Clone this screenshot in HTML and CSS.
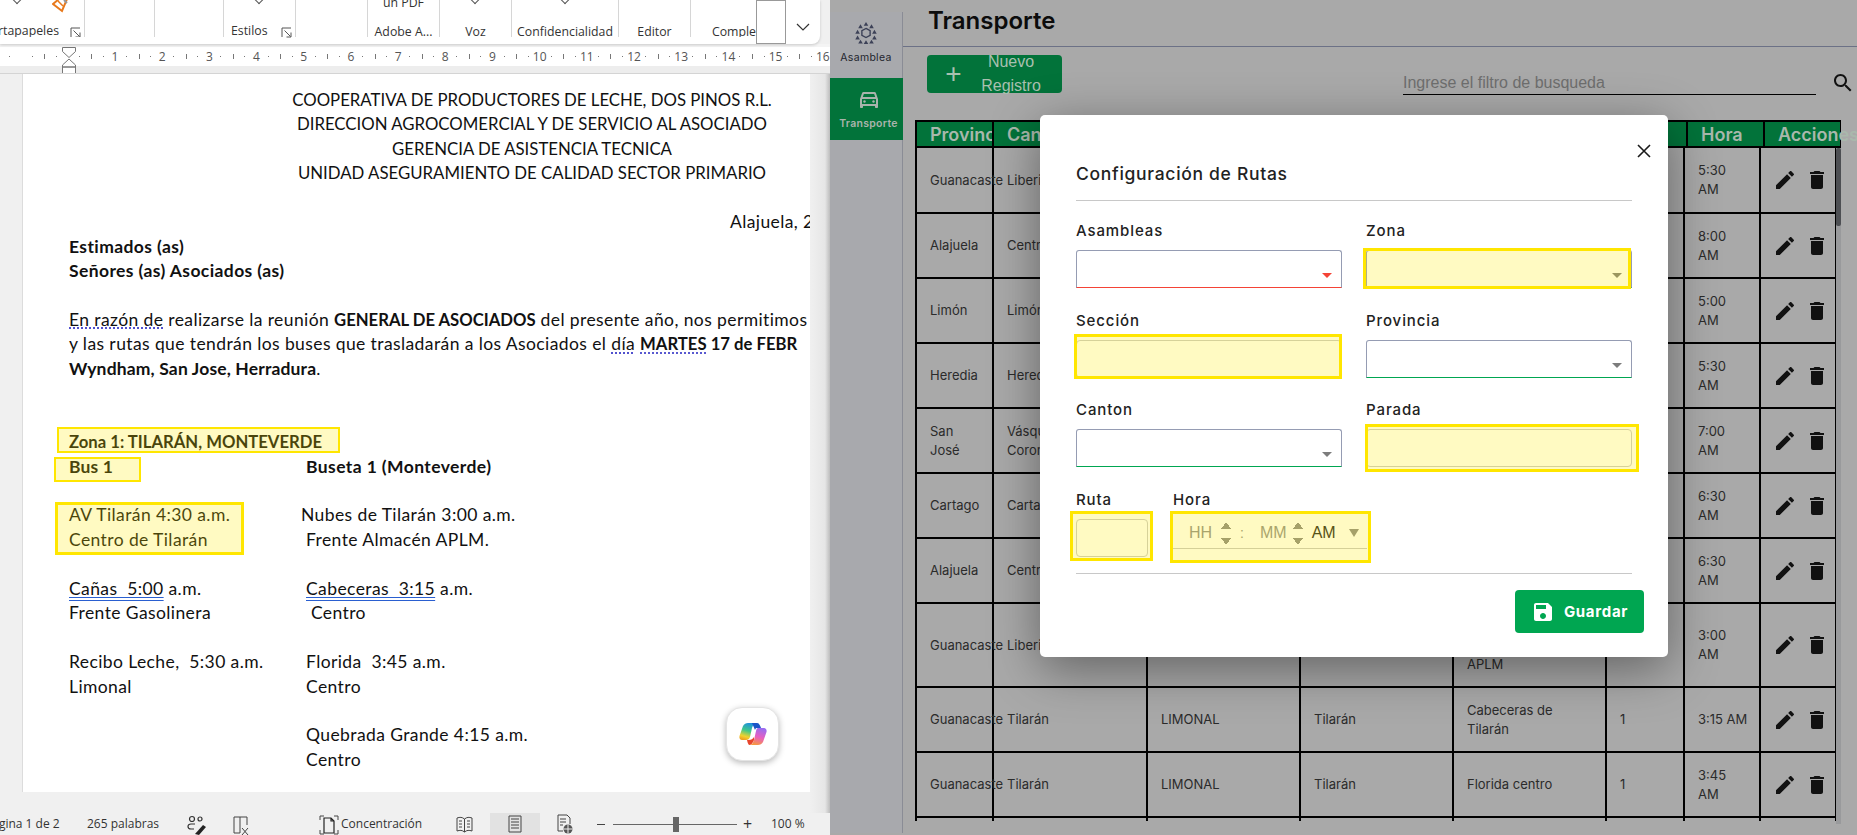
FILE: index.html
```html
<!DOCTYPE html>
<html lang="es">
<head>
    <meta charset="UTF-8">
    <title>Transporte</title>
    <link rel="stylesheet" href="styles.css">
</head>
<body>
<svg class="defs" width="0" height="0">
    <symbol id="ic-edit" viewBox="0 0 24 24"><path d="M3 17.25V21h3.75L17.81 9.94l-3.75-3.75L3 17.25zM20.71 7.04c.39-.39.39-1.02 0-1.41l-2.34-2.34c-.39-.39-1.02-.39-1.41 0l-1.83 1.83 3.75 3.75 1.83-1.83z"/></symbol>
    <symbol id="ic-trash" viewBox="0 0 24 24"><path d="M6 19c0 1.1.9 2 2 2h8c1.1 0 2-.9 2-2V7H6v12zM19 4h-3.5l-1-1h-5l-1 1H5v2h14V4z"/></symbol>
    <symbol id="ic-launch" viewBox="0 0 11 11"><path d="M1 10V1h9M3.500 3.500l6 6M10 5.500V10H5.500" fill="none" stroke="#555"/></symbol>
</svg>
<div class="screen">

    <!-- Ventana de Word -->
    <section class="word">
        <div class="ribbon">
            <div class="group g1">
                <svg class="ico-eraser" width="18" height="13" viewBox="0 0 18 13"><path d="M1 4l6-5 8 0-5 12z" fill="#fff" stroke="#e8791c" stroke-width="2"/><path d="M6 1l5 5" stroke="#e8791c" stroke-width="1.500"/><path d="M12 0l3 3" stroke="#999" stroke-width="2"/></svg>
                <span class="caret c1"></span>
                <span class="glabel">Portapapeles</span><svg class="launcher"><use href="#ic-launch"/></svg>
            </div>
            <div class="group g2"></div>
            <div class="group g3"></div>
            <div class="group g4"><span class="caret c2"></span><span class="glabel">Estilos</span><svg class="launcher"><use href="#ic-launch"/></svg></div>
            <div class="group g5"></div>
            <div class="group g6"><span class="gtop">un PDF</span><span class="glabel">Adobe A...</span></div>
            <div class="group g7"><span class="caret"></span><span class="glabel">Voz</span></div>
            <div class="group g8"><span class="caret c3"></span><span class="glabel">Confidencialidad</span></div>
            <div class="group g9"><span class="glabel">Editor</span></div>
            <div class="group g10"><span class="glabel">Comple</span></div>
            <div class="ribbon-box"></div>
            <svg class="ribbon-chevron" width="14" height="8" viewBox="0 0 14 8"><path d="M1 1l6 6 6-6" fill="none" stroke="#333" stroke-width="1.2"/></svg>
        </div>

        <div class="ruler">
            <div class="ruler-scale">
                <span class="cm"></span><span class="cm"></span>
                <span class="cm">1</span><span class="cm">2</span><span class="cm">3</span><span class="cm">4</span>
                <span class="cm">5</span><span class="cm">6</span><span class="cm">7</span><span class="cm">8</span>
                <span class="cm">9</span><span class="cm">10</span><span class="cm">11</span><span class="cm">12</span>
                <span class="cm">13</span><span class="cm">14</span><span class="cm">15</span><span class="cm">16</span>
            </div>
            <svg class="indent" width="14" height="27" viewBox="0 0 14 27"><path d="M.5.5h13v4l-6.500 6-6.500-6zM7 12l6.500 6v2H.5v-2zM.5 20h13v6.500H.5z" fill="#fff" stroke="#777"/></svg>
        </div>

        <div class="doc-area">
            <div class="page">
                <p class="line center">COOPERATIVA DE PRODUCTORES DE LECHE, DOS PINOS R.L.</p>
                <p class="line center">DIRECCION AGROCOMERCIAL Y DE SERVICIO AL ASOCIADO</p>
                <p class="line center">GERENCIA DE ASISTENCIA TECNICA</p>
                <p class="line center">UNIDAD ASEGURAMIENTO DE CALIDAD SECTOR PRIMARIO</p>
                <p class="line"></p>
                <p class="line date">Alajuela, 2</p>
                <p class="line"><b>Estimados (as)</b></p>
                <p class="line"><b>Señores (as) Asociados (as)</b></p>
                <p class="line"></p>
                <p class="line"><u class="dot">En razón de</u> realizarse la reunión <b class="caps">GENERAL DE ASOCIADOS</b> del presente año, nos permitimos</p>
                <p class="line">y las rutas que tendrán los buses que trasladarán a los Asociados el <u class="dot">día</u> <b class="caps"><u class="dot">MARTES</u> 17 de FEBR</b></p>
                <p class="line"><b class="narrow">Wyndham, San Jose, Herradura</b>.</p>
                <p class="line"></p>
                <p class="line"></p>
                <p class="line"><b class="caps">Zona 1: TILARÁN, MONTEVERDE</b></p>
                <div class="line cols"><b class="narrow">Bus 1</b><b>Buseta 1 (Monteverde)</b></div>
                <p class="line"></p>
                <div class="line cols"><span>AV Tilarán 4:30 a.m.</span><span class="out">Nubes de Tilarán 3:00 a.m.</span></div>
                <div class="line cols"><span>Centro de Tilarán</span><span>Frente Almacén APLM.</span></div>
                <p class="line"></p>
                <div class="line cols"><span><u class="dbl">Cañas  5:00</u> a.m.</span><span><u class="dbl">Cabeceras  3:15</u> a.m.</span></div>
                <div class="line cols"><span>Frente Gasolinera</span><span>&nbsp;Centro</span></div>
                <p class="line"></p>
                <div class="line cols"><span>Recibo Leche,  5:30 a.m.</span><span>Florida  3:45 a.m.</span></div>
                <div class="line cols"><span>Limonal</span><span>Centro</span></div>
                <p class="line"></p>
                <div class="line cols"><span></span><span>Quebrada Grande 4:15 a.m.</span></div>
                <div class="line cols"><span></span><span>Centro</span></div>

                <div class="mark m-zona"></div>
                <div class="mark m-bus"></div>
                <div class="mark m-av"></div>
            </div>
            <div class="copilot">
                <svg width="28" height="24" viewBox="0 0 28 24">
                    <defs>
                        <linearGradient id="cpA" x1="0.6" y1="0" x2="0.3" y2="1"><stop offset="0" stop-color="#1f8fe0"/><stop offset=".45" stop-color="#3fc88a"/><stop offset=".8" stop-color="#f2d22e"/><stop offset="1" stop-color="#f0a020"/></linearGradient>
                        <linearGradient id="cpB" x1="0.6" y1="0" x2="0.3" y2="1"><stop offset="0" stop-color="#9a6cf0"/><stop offset=".5" stop-color="#e85fc0"/><stop offset="1" stop-color="#f79a3a"/></linearGradient>
                    </defs>
                    <path d="M9 1h9c-3 0-4 2-5 5l-2 9c-.5 2-2 3-4 3H3c-2 0-3-2-2.500-4L4 4c1-2 3-3 5-3z" fill="url(#cpA)"/>
                    <path d="M13 1h5c2 0 3 2 4 5h-4c-1 0-1.500.5-2 2z" fill="#1b55c8"/>
                    <path d="M19 6h6c2 0 3 2 2.500 4L24 20c-1 2-3 3-5 3h-9c3 0 4-2 5-5l2-9c.5-2 1-3 2-3z" fill="url(#cpB)"/>
                    <path d="M15 18l-1 2c-1 2-2 3-4 3 -1-1-1.500-3-2-5h2c2 0 4-1 5-3z" fill="#e8452c"/>
                </svg>
            </div>
        </div>

        <div class="status">
            <span class="st-page">Página 1 de 2</span>
            <span class="st-words">265 palabras</span>
            <svg class="st-people" width="20" height="20" viewBox="0 0 20 20"><g fill="none" stroke="#333" stroke-width="1.200"><circle cx="5" cy="4" r="2.500"/><circle cx="13" cy="4" r="2"/><path d="M8 9H4c-2 0-3 1-3 2.500S2 14 4 14h3"/></g><path d="M8 19l8-9 3 2-7 8z" fill="#222"/></svg>
            <svg class="st-book" width="18" height="20" viewBox="0 0 18 20"><path d="M2 2h13v8M2 2v16h6M8 2v16" fill="none" stroke="#444"/><path d="M10 13l6 7M16 13l-6 7" stroke="#444"/></svg>
            <svg class="st-focus" width="20" height="20" viewBox="0 0 20 20"><path d="M1 5V1h4M15 1h4v4M1 15v4h4M15 19h4v-4" fill="none" stroke="#444"/><path d="M5 3h7l3 3v12H5zM12 3v3h3" fill="none" stroke="#222" stroke-width="1.200"/></svg>
            <span class="st-focus-text">Concentración</span>
            <svg class="st-read" width="17" height="17" viewBox="0 0 17 17"><path d="M1 2c3-1 5-1 7.500 1C11 1 13 1 16 2v13c-3-1-5-1-7.500 1C6 14 4 14 1 15zM8.500 3v13M3 5h3M3 8h3M3 11h3M11 5h3M11 8h3M11 11h3" fill="none" stroke="#444"/></svg>
            <span class="st-print"><svg width="14" height="18" viewBox="0 0 14 18"><path d="M1 1h12v16H1zM3 4h8M3 7h8M3 10h8M3 13h8" fill="none" stroke="#444"/></svg></span>
            <svg class="st-web" width="18" height="20" viewBox="0 0 18 20"><path d="M2 1h9l3 3v6M2 1v16h5M4 5h6M4 8h6M4 11h3" fill="none" stroke="#444"/><circle cx="12" cy="15" r="4.500" fill="#555"/><path d="M7.500 15h9M12 10.500v9" stroke="#eee"/></svg>
            <span class="st-minus"></span>
            <span class="st-slider"><i></i></span>
            <span class="st-plus">+</span>
            <span class="st-zoom">100 %</span>
        </div>
    </section>

    <!-- Portal de transporte -->
    <section class="portal">
        <aside class="side">
            <div class="side-item">
                <svg width="22" height="24" viewBox="0 0 24 24"><g fill="#3c4157"><path d="M12 0l2.500 4.200h-5zM6 2.500l2.500 4.200h-5zM18 2.500l2.500 4.200h-5zM2.800 8.500l2.500 4.200h-5zM21.200 8.500l2.500 4.200h-5zM2.800 14.800l2.500 4.200h-5zM21.200 14.800l2.500 4.200h-5zM6 19.300l2.500 4.200h-5zM18 19.300l2.500 4.200h-5zM12 19.800l2.500 4.200h-5z"/></g><path d="M12 7l4.500 2.500v5L12 17l-4.500-2.500v-5z" fill="none" stroke="#3c4157" stroke-width="1.500"/></svg>
                <span>Asamblea</span>
            </div>
            <div class="side-item active">
                <svg width="24" height="24" viewBox="0 0 24 24"><path fill="#a9b3ac" d="M18.920 6.010C18.720 5.420 18.160 5 17.500 5h-11c-.66 0-1.210.42-1.420 1.010L3 12v8c0 .55.45 1 1 1h1c.55 0 1-.45 1-1v-1h12v1c0 .55.45 1 1 1h1c.55 0 1-.45 1-1v-8l-2.080-5.990zM6.850 7h10.290l1.080 3.110H5.770L6.850 7zM19 17H5v-5h14v5z"/><circle cx="7.500" cy="14.500" r="1.200" fill="#a9b3ac"/><circle cx="16.500" cy="14.500" r="1.200" fill="#a9b3ac"/></svg>
                <span>Transporte</span>
            </div>
        </aside>

        <main class="content">
            <h1 class="title">Transporte</h1>

            <div class="toolbar">
                <button type="button" class="btn-new"><span class="plus">+</span><span class="btn-new-text">Nuevo Registro</span></button>
                <div class="search">
                    <span class="search-text">Ingrese el filtro de busqueda</span>
                    <svg width="24" height="24" viewBox="0 0 24 24"><path fill="#111" d="M15.500 14h-.79l-.28-.27C15.410 12.590 16 11.110 16 9.500 16 5.910 13.090 3 9.500 3S3 5.910 3 9.500 5.910 16 9.500 16c1.610 0 3.090-.59 4.230-1.570l.27.28v.79l5 4.990L20.490 19l-4.990-5zm-6 0C7.010 14 5 11.990 5 9.500S7.010 5 9.500 5 14 7.010 14 9.500 11.990 14 9.500 14z"/></svg>
                </div>
            </div>

            <div class="table-head">
                <span class="th w-prov">Provincia</span>
                <span class="th w-can">Canton</span>
                <span class="th w-sec">Sección</span>
                <span class="th w-dis">Distrito</span>
                <span class="th w-par">Parada</span>
                <span class="th w-rut">Ruta</span>
                <span class="th w-hor">Hora</span>
                <span class="th w-acc">Acciones</span>
            </div>

            <div class="table-body">
                <table class="rows">
                    <colgroup>
                        <col class="c-prov"><col class="c-can"><col class="c-sec"><col class="c-dis">
                        <col class="c-par"><col class="c-rut"><col class="c-hor"><col class="c-acc">
                    </colgroup>
                    <tbody>
                        <tr><td>Guanacaste</td><td>Liberia</td><td></td><td></td><td></td><td></td><td>5:30 AM</td><td class="actions"><svg><use href="#ic-edit"/></svg><svg><use href="#ic-trash"/></svg></td></tr>
                        <tr><td>Alajuela</td><td>Central</td><td></td><td></td><td></td><td></td><td>8:00 AM</td><td class="actions"><svg><use href="#ic-edit"/></svg><svg><use href="#ic-trash"/></svg></td></tr>
                        <tr><td>Limón</td><td>Limón</td><td></td><td></td><td></td><td></td><td>5:00 AM</td><td class="actions"><svg><use href="#ic-edit"/></svg><svg><use href="#ic-trash"/></svg></td></tr>
                        <tr><td>Heredia</td><td>Heredia</td><td></td><td></td><td></td><td></td><td>5:30 AM</td><td class="actions"><svg><use href="#ic-edit"/></svg><svg><use href="#ic-trash"/></svg></td></tr>
                        <tr><td>San José</td><td>Vásquez de Coronado</td><td></td><td></td><td></td><td></td><td>7:00 AM</td><td class="actions"><svg><use href="#ic-edit"/></svg><svg><use href="#ic-trash"/></svg></td></tr>
                        <tr><td>Cartago</td><td>Cartago</td><td></td><td></td><td></td><td></td><td>6:30 AM</td><td class="actions"><svg><use href="#ic-edit"/></svg><svg><use href="#ic-trash"/></svg></td></tr>
                        <tr><td>Alajuela</td><td>Central</td><td></td><td></td><td></td><td></td><td>6:30 AM</td><td class="actions"><svg><use href="#ic-edit"/></svg><svg><use href="#ic-trash"/></svg></td></tr>
                        <tr class="tall"><td>Guanacaste</td><td>Liberia</td><td></td><td></td><td class="par-3">Frente Almacén APLM</td><td></td><td>3:00 AM</td><td class="actions"><svg><use href="#ic-edit"/></svg><svg><use href="#ic-trash"/></svg></td></tr>
                        <tr><td>Guanacaste</td><td>Tilarán</td><td>LIMONAL</td><td>Tilarán</td><td>Cabeceras de Tilarán</td><td>1</td><td class="tight">3:15 AM</td><td class="actions"><svg><use href="#ic-edit"/></svg><svg><use href="#ic-trash"/></svg></td></tr>
                        <tr><td>Guanacaste</td><td>Tilarán</td><td>LIMONAL</td><td>Tilarán</td><td>Florida centro</td><td>1</td><td>3:45 AM</td><td class="actions"><svg><use href="#ic-edit"/></svg><svg><use href="#ic-trash"/></svg></td></tr>
                        <tr class="stub"><td></td><td></td><td></td><td></td><td></td><td></td><td></td><td></td></tr>
                    </tbody>
                </table>
                <div class="scroll"><i></i></div>
            </div>
        </main>

        <!-- Modal -->
        <div class="modal">
            <svg class="modal-close" width="16" height="16" viewBox="0 0 16 16"><path d="M2 2l12 12M14 2L2 14" stroke="#1a1a1a" stroke-width="1.600"/></svg>
            <h2 class="modal-title">Configuración de Rutas</h2>
            <div class="form-grid">
                <div class="field"><label>Asambleas</label><div class="select error"><span class="arrow"></span></div></div>
                <div class="field"><label>Zona</label><div class="select"><span class="arrow"></span></div></div>
                <div class="field"><label>Sección</label><div class="input"></div></div>
                <div class="field"><label>Provincia</label><div class="select"><span class="arrow"></span></div></div>
                <div class="field"><label>Canton</label><div class="select"><span class="arrow"></span></div></div>
                <div class="field"><label>Parada</label><div class="input"></div></div>
            </div>
            <div class="time-row">
                <div class="field ruta"><label>Ruta</label><div class="input"></div></div>
                <div class="field hora">
                    <label>Hora</label>
                    <div class="time">
                        <span class="t-hh">HH</span>
                        <span class="spin"></span>
                        <span class="t-colon">:</span>
                        <span class="t-mm">MM</span>
                        <span class="spin spin-2"></span>
                        <span class="t-am">AM</span>
                        <span class="t-drop"></span>
                    </div>
                </div>
            </div>
            <div class="modal-foot">
                <button type="button" class="btn-save">
                    <svg width="24" height="24" viewBox="0 0 24 24"><path fill="#fff" d="M17 3H5c-1.110 0-2 .9-2 2v14c0 1.100.89 2 2 2h14c1.100 0 2-.9 2-2V7l-4-4zm-5 16c-1.660 0-3-1.340-3-3s1.340-3 3-3 3 1.340 3 3-1.340 3-3 3zm3-10H5V5h10v4z"/></svg>
                    Guardar
                </button>
            </div>
            <div class="mark m-f-zona"></div>
            <div class="mark m-f-sec"></div>
            <div class="mark m-f-par"></div>
            <div class="mark m-f-rut"></div>
            <div class="mark m-f-hor"></div>
        </div>
    </section>
</div>
</body>
</html>
```

FILE: styles.css
```css
* {
    box-sizing: border-box;
}
html, body {
    margin: 0;
    padding: 0;
    height: 100%;
    overflow: hidden;
}
.defs {
    display: block;
    height: 0;
}
.screen {
    display: flex;
    width: 1857px;
    height: 835px;
    overflow: hidden;
    position: relative;
}

/* Word */
.word {
    width: 830px;
    flex: none;
    display: flex;
    flex-direction: column;
    background-color: #f0f0f0;
    font-family: "Open Sans", sans-serif;
    color: #333;
    overflow: hidden;
}
.ribbon {
    height: 44px;
    width: 820px;
    flex: none;
    display: flex;
    background-color: #fff;
    border-bottom-right-radius: 8px;
    box-shadow: 0 1px 3px rgba(0, 0, 0, 0.18);
    position: relative;
    z-index: 1;
    font-size: 12.3px;
}
.group {
    height: 37px;
    border-right: 1px solid #d6d6d6;
    position: relative;
    display: flex;
    align-items: flex-end;
    justify-content: center;
    flex: none;
}
.g1 { width: 85px; justify-content: flex-end; padding-right: 3px; overflow: hidden; }
.g2 { width: 70px; }
.g3 { width: 69px; }
.g4 { width: 72px; justify-content: flex-start; padding-left: 7px; }
.g5 { width: 72px; }
.g6 { width: 72px; }
.g7 { width: 72px; }
.g8 { width: 107px; }
.g9 { width: 72px; }
.g10 { width: 65px; border-right: 0; justify-content: flex-end; overflow: hidden; }
.glabel {
    white-space: nowrap;
    line-height: 16px;
    margin-bottom: -3px;
    flex: none;
}
.g1 .glabel, .g4 .glabel {
    margin-bottom: -2px;
}
.gtop {
    position: absolute;
    top: -6px;
    left: 15px;
}
.launcher {
    width: 11px;
    height: 11px;
    flex: none;
    margin-left: 11px;
    margin-bottom: -1px;
}
.g4 .launcher {
    margin-left: 13px;
}
.caret {
    position: absolute;
    top: -3px;
    left: 32px;
    width: 6px;
    height: 6px;
    border-right: 1px solid #555;
    border-bottom: 1px solid #555;
    transform: rotate(45deg);
}
.c1 { left: 14px; }
.c2 { left: 32px; }
.c3 { left: 50px; }
.ico-eraser {
    position: absolute;
    left: 52px;
    top: 0;
}
.ribbon-box {
    position: absolute;
    left: 756px;
    top: 0;
    width: 30px;
    height: 44px;
    border: 1px solid #999;
    background-color: #fff;
}
.ribbon-chevron {
    position: absolute;
    left: 796px;
    top: 23px;
}
.ruler {
    height: 30px;
    flex: none;
    position: relative;
    background:
        linear-gradient(#f4f4f4 0 3px, #fff 3px 22px, #ededed 22px 29px);
    border-bottom: 1px solid #d4d4d4;
    overflow: hidden;
}
.ruler-scale {
    display: flex;
    margin-left: -3px;
    height: 22px;
    padding-top: 3px;
}
.cm {
    width: 47.2px;
    flex: none;
    text-align: center;
    font-size: 12px;
    line-height: 20px;
    color: #555;
    background:
        linear-gradient(#777, #777) 0 50% / 1px 5px no-repeat,
        linear-gradient(#777, #777) 25% 50% / 1px 1px no-repeat,
        linear-gradient(#777, #777) 75% 50% / 1px 1px no-repeat;
}
.indent {
    position: absolute;
    left: 62px;
    top: 3px;
}

.doc-area {
    flex: 1;
    position: relative;
    background: linear-gradient(to right, #f0f0f0 810px, #e6e6e6 825px, #bdbdbd 830px);
}
.page {
    position: relative;
    margin-left: 22px;
    width: 788px;
    height: 718px;
    background-color: #fff;
    border-left: 1px solid #dcdcdc;
    padding: 14px 0 0 46px;
    font-family: Lato, "Open Sans", sans-serif;
    font-size: 17.5px;
    letter-spacing: 0.4px;
    color: #111;
    overflow: hidden;
}
.line {
    margin: 0;
    height: 24.45px;
    line-height: 24.45px;
    white-space: pre;
}
.center {
    text-align: center;
    padding-left: 185px;
    font-size: 16.8px;
    letter-spacing: 0;
}
.date {
    padding-left: 661px;
}
.cols {
    display: grid;
    grid-template-columns: 237px 1fr;
}
.out {
    margin-left: -5px;
}
.caps {
    font-size: 16.7px;
    letter-spacing: 0;
}
.narrow {
    letter-spacing: 0.15px;
}
u.dot {
    text-decoration: underline dotted #3a3ac8;
    text-underline-offset: 2px;
}
u.dbl {
    text-decoration: underline double #2a5fd0;
    text-underline-offset: 2px;
}
.copilot {
    position: absolute;
    left: 726px;
    top: 633px;
    width: 53px;
    height: 54px;
    border-radius: 16px;
    background-color: #fff;
    border: 1px solid #e4e4e4;
    box-shadow: 0 2px 6px rgba(0, 0, 0, 0.28);
    display: flex;
    align-items: center;
    justify-content: center;
}
.status {
    height: 22px;
    flex: none;
    position: relative;
    background-color: #f0f0f0;
    font-size: 12px;
    line-height: 22px;
    white-space: nowrap;
}
.status > * {
    position: absolute;
}
.st-page { left: -15px; }
.st-words { left: 87px; }
.st-people { left: 187px; top: 2px; }
.st-book { left: 232px; top: 2px; }
.st-focus { left: 319px; top: 2px; }
.st-focus-text { left: 341px; }
.st-read { left: 456px; top: 3px; }
.st-print {
    left: 490px;
    top: 0;
    width: 50px;
    height: 22px;
    background-color: #e2e2e2;
    display: flex;
    align-items: center;
    justify-content: center;
}
.st-web { left: 556px; top: 1px; }
.st-minus { left: 597px; top: 11px; width: 8px; height: 1px; background-color: #444; }
.st-slider { left: 613px; top: 11px; width: 124px; height: 1px; background-color: #666; }
.st-slider i {
    position: absolute;
    left: 60px;
    top: -7px;
    width: 6px;
    height: 15px;
    background-color: #666;
}
.st-plus { left: 743px; font-size: 16px; }
.st-zoom { left: 771px; }

/* Portal */
.portal {
    flex: 1;
    position: relative;
    display: flex;
    background-color: #a9a9a9;
    font-family: Inter, sans-serif;
    overflow: hidden;
}
.side {
    width: 73px;
    flex: none;
    margin-top: 12px;
    height: 821px;
    background-color: #a8a9ad;
    border-right: 1px solid #8a8c95;
    display: flex;
    flex-direction: column;
}
.side-item {
    height: 66px;
    display: flex;
    flex-direction: column;
    align-items: center;
    padding-top: 9px;
    gap: 6px;
    font-size: 10.5px;
    letter-spacing: 0.3px;
    color: #23252e;
    white-space: nowrap;
}
.side-item.active {
    height: 62px;
    background-color: #02733a;
    color: #a9b3ac;
    font-weight: 600;
    margin-right: -1px;
    padding: 9px 0 0 4px;
}
.content {
    flex: 1;
    min-width: 0;
}
.title {
    margin: 0;
    height: 47px;
    padding: 5px 0 0 25px;
    font-size: 24px;
    line-height: 32px;
    font-weight: 600;
    color: #0c0c0c;
    border-bottom: 1px solid #6c7186;
}
.toolbar {
    display: flex;
    justify-content: space-between;
    height: 73px;
    padding: 8px 0 0 24px;
}
.btn-new {
    width: 135px;
    height: 38px;
    padding: 0;
    border: 0;
    border-radius: 4px;
    background-color: #02733a;
    color: #a9c0b0;
    font-family: "Liberation Sans", sans-serif;
    font-size: 16px;
    display: flex;
    align-items: center;
}
.plus {
    width: 50px;
    padding-left: 3px;
    font-size: 28px;
    font-weight: 300;
    flex: none;
}
.btn-new-text {
    width: 68px;
    line-height: 24px;
    text-align: center;
}
.search {
    display: flex;
    align-items: flex-start;
    height: 32px;
    margin-top: 8px;
    width: 454px;
}
.search-text {
    width: 413px;
    flex: none;
    height: 32px;
    line-height: 40px;
    border-bottom: 1px solid #000;
    font-family: "Liberation Sans", sans-serif;
    font-size: 16px;
    color: #6e6e6e;
    margin-right: 15px;
}
.search svg {
    margin-top: 8px;
}
.table-head {
    display: flex;
    margin-left: 12px;
    width: 926px;
    height: 28px;
    background-color: #02733a;
    border: 2px solid #000;
    border-right-width: 1px;
}
.th {
    flex: none;
    height: 100%;
    padding-left: 13px;
    border-right: 2px solid #000;
    font-size: 18px;
    line-height: 25px;
    font-weight: 600;
    color: #a9b8ac;
    white-space: nowrap;
    overflow: hidden;
}
.w-prov { width: 77px; }
.w-can { width: 155px; }
.w-sec { width: 154px; }
.w-dis { width: 154px; }
.w-par { width: 154px; }
.w-rut { width: 77px; }
.w-hor { width: 77px; }
.w-acc { width: 76px; border-right: 0; overflow: visible; }

.table-body {
    margin-left: 12px;
    width: 926px;
    position: relative;
    height: 700px;
}
.rows {
    border-collapse: collapse;
    table-layout: fixed;
    width: 920px;
    font-size: 13px;
    line-height: 19px;
    color: #2b2b2b;
}
.c-prov { width: 77px; }
.c-can { width: 154px; }
.c-sec { width: 153px; }
.c-dis { width: 153px; }
.c-par { width: 153px; }
.c-rut { width: 78px; }
.c-hor { width: 76px; }
.c-acc { width: 76px; }
.rows td {
    height: 65px;
    border: 2px solid #000;
    border-top: 0;
    padding: 0 15px 0 13px;
    vertical-align: middle;
}
.rows tr.tall td {
    height: 84px;
}
.rows tr.stub td {
    height: 4px;
    border-bottom: 0;
}
.rows td.par-3 {
    padding-right: 50px;
}
.rows td.tight {
    padding-right: 0;
    white-space: nowrap;
}
.rows td.actions {
    padding: 0 0 0 12px;
    white-space: nowrap;
    font-size: 0;
}
.rows td.actions svg {
    width: 24px;
    height: 24px;
    vertical-align: middle;
    fill: #111;
    margin-right: 8px;
}
.scroll {
    position: absolute;
    left: 921px;
    top: 0;
    width: 5px;
    height: 676px;
    background-color: #999a9c;
}
.scroll i {
    display: block;
    height: 78px;
    background-color: #4d4f53;
    border-radius: 2px;
}

/* Modal */
.modal {
    position: absolute;
    left: 210px;
    top: 115px;
    width: 628px;
    height: 542px;
    padding: 0 36px;
    background-color: #fff;
    border-radius: 5px;
    box-shadow: 0 12px 50px rgba(0, 0, 0, 0.42);
    color: #222;
}
.modal-close {
    position: absolute;
    left: 596px;
    top: 28px;
}
.modal-title {
    margin: 0;
    height: 86px;
    padding-top: 47px;
    font-size: 17.5px;
    letter-spacing: 0.7px;
    line-height: 24px;
    font-weight: 500;
    border-bottom: 1px solid #c8c8c8;
}
.form-grid {
    display: grid;
    grid-template-columns: 266px 266px;
    column-gap: 24px;
    row-gap: 22.5px;
    padding-top: 20px;
}
.field label {
    display: block;
    font-size: 15px;
    letter-spacing: 0.9px;
    line-height: 20px;
    font-weight: 500;
    color: #222;
    margin-bottom: 9px;
}
.select, .input {
    height: 38px;
    border: 1px solid #959cb3;
    border-bottom: 1px solid #00a651;
    border-radius: 3px 3px 0 0;
    background-color: #fff;
    position: relative;
}
.select.error {
    border-bottom-color: #f44336;
}
.input {
    border: 1px solid #c9c9c9;
    border-radius: 4px;
}
.arrow {
    position: absolute;
    right: 9px;
    bottom: 9px;
    border-left: 5px solid transparent;
    border-right: 5px solid transparent;
    border-top: 5px solid #7c7c7c;
}
.error .arrow {
    border-top-color: #f44336;
}
.time-row {
    display: flex;
    gap: 25px;
    margin-top: 23px;
    height: 84px;
    border-bottom: 1px solid #c8c8c8;
}
.ruta {
    width: 72px;
}
.hora {
    width: 193px;
}
.hora label {
    margin-bottom: 2px;
}
.time {
    width: 196px;
    height: 37px;
    margin-left: -2px;
    padding: 6px 0 0 18px;
    border-bottom: 1px solid #c8c8c8;
    display: flex;
    align-items: center;
    font-family: "Liberation Sans", sans-serif;
    font-size: 16px;
    color: #8f8f8f;
}
.spin {
    width: 10px;
    height: 28px;
    margin-left: 9px;
    flex: none;
    background:
        linear-gradient(to bottom right, transparent 50%, #8a8a8a 50%) 0 3px / 5px 7px no-repeat,
        linear-gradient(to bottom left, transparent 50%, #8a8a8a 50%) 5px 3px / 5px 7px no-repeat,
        linear-gradient(to top right, transparent 50%, #8a8a8a 50%) 0 19px / 5px 7px no-repeat,
        linear-gradient(to top left, transparent 50%, #8a8a8a 50%) 5px 19px / 5px 7px no-repeat;
}
.spin-2 { margin-left: 6px; }
.t-colon { margin: 0 16px 0 9px; font-size: 14px; }
.t-am { color: #222; margin-left: 9px; }
.t-drop {
    margin-left: 13px;
    border-left: 5px solid transparent;
    border-right: 5px solid transparent;
    border-top: 8px solid #8a8a8a;
}
.modal-foot {
    display: flex;
    justify-content: flex-end;
    padding-top: 16px;
    margin-right: -12px;
}
.btn-save {
    width: 129px;
    height: 43px;
    border: 0;
    border-radius: 4px;
    background-color: #00a651;
    color: #fff;
    font-family: Inter, sans-serif;
    font-size: 15px;
    letter-spacing: 0.7px;
    font-weight: 700;
    display: flex;
    align-items: center;
    justify-content: center;
    gap: 9px;
}

/* Recuadros amarillos sobre la captura */
.mark {
    position: absolute;
    border: 3px solid #ffe600;
    background-color: rgba(255, 236, 0, 0.24);
    pointer-events: none;
}
.m-zona { left: 34px; top: 353px; width: 283px; height: 26px; border-width: 2px; }
.m-bus { left: 31px; top: 383px; width: 87px; height: 25px; border-width: 2px; }
.m-av { left: 32px; top: 428px; width: 189px; height: 53px; }
.m-f-zona { left: 323px; top: 133px; width: 268px; height: 41px; }
.m-f-sec { left: 34px; top: 219px; width: 268px; height: 45px; }
.m-f-par { left: 325px; top: 309px; width: 274px; height: 48px; }
.m-f-rut { left: 30px; top: 396px; width: 83px; height: 50px; }
.m-f-hor { left: 130px; top: 396px; width: 201px; height: 52px; }
```
